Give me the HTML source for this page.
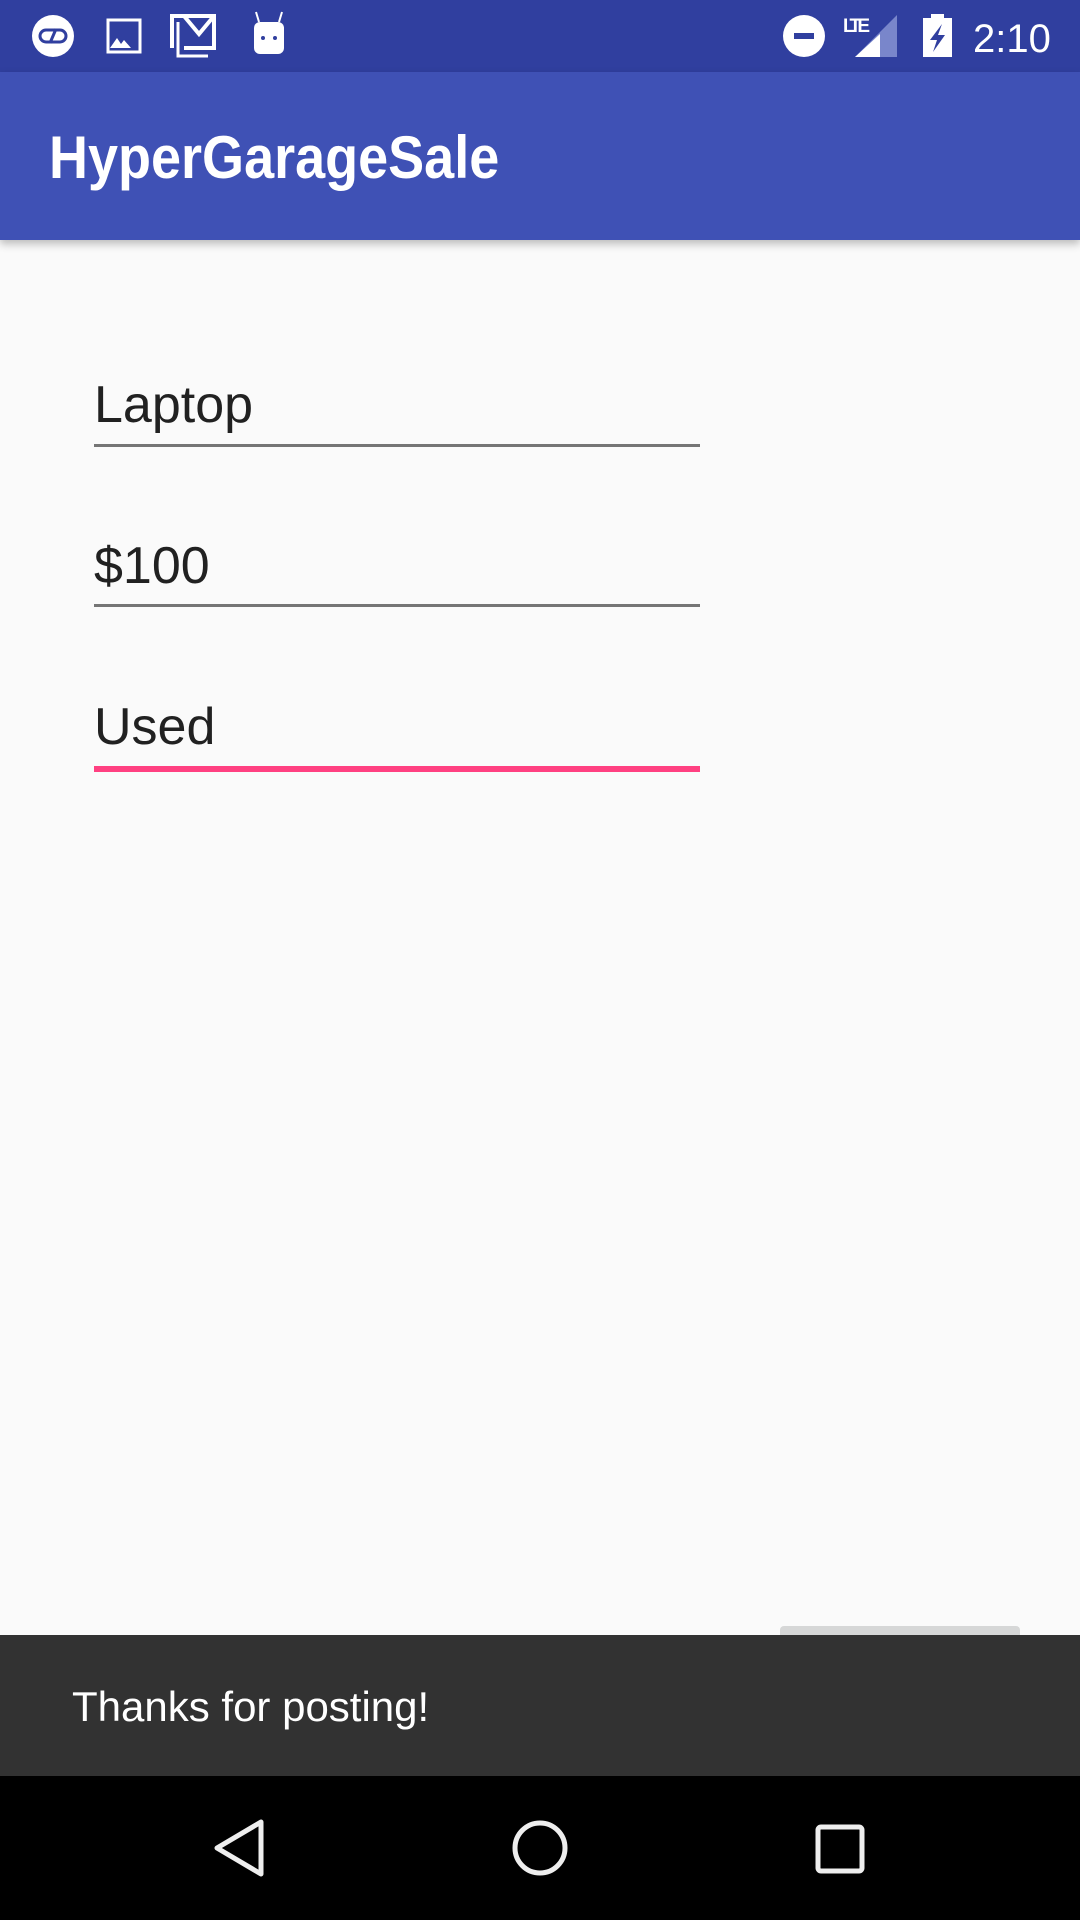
<!DOCTYPE html>
<html><head><style>
html,body{margin:0;padding:0;width:1080px;height:1920px;overflow:hidden;background:#fafafa;font-family:"Liberation Sans",sans-serif;position:relative}
.abs{position:absolute}
.txt{color:#212121;font-size:52px;line-height:1;left:94px}
.line{left:94px;width:606px;height:3px;background:#757575}
</style></head><body>
<div class="abs" style="left:0;top:0;width:1080px;height:72px;background:#303f9f"></div>
<div class="abs" style="left:0;top:72px;width:1080px;height:168px;background:#3f51b5;box-shadow:0 4px 8px rgba(0,0,0,0.25)"></div>
<svg class="abs" style="left:0;top:0" width="1080" height="72">
 <circle cx="53" cy="36" r="21" fill="#fff"/>
 <rect x="40" y="30" width="26" height="12" rx="6" fill="none" stroke="#303f9f" stroke-width="3"/>
 <line x1="50" y1="43" x2="56" y2="29" stroke="#303f9f" stroke-width="3"/>
 <path d="M110 48 L117 38 L121 44 L124 40 L131 48Z" fill="#fff"/>
 <rect x="108" y="20" width="32" height="32" fill="none" stroke="#fff" stroke-width="3"/>
 <path d="M170 16 H214 V48 H184" fill="none" stroke="#fff" stroke-width="4"/>
 <path d="M178 22 V56 H208" fill="none" stroke="#fff" stroke-width="3"/>
 <path d="M184 16 L199 34 L214 16" fill="none" stroke="#fff" stroke-width="4"/>
 <path d="M172 16 V48" stroke="#fff" stroke-width="4"/>
 <rect x="254" y="22" width="30" height="32" rx="6" fill="#fff"/>
 <line x1="259" y1="22" x2="256" y2="12" stroke="#fff" stroke-width="2"/>
 <line x1="279" y1="22" x2="282" y2="12" stroke="#fff" stroke-width="2"/>
 <circle cx="263" cy="38" r="2" fill="#303f9f"/><circle cx="275" cy="38" r="2" fill="#303f9f"/>
 <circle cx="804" cy="36" r="21" fill="#fff"/>
 <rect x="794" y="33" width="20" height="6" fill="#303f9f"/>
 <text x="843" y="32" fill="#fff" font-size="19" font-weight="bold" font-family="Liberation Sans Narrow,Liberation Sans,sans-serif" textLength="27">LTE</text>
 <path d="M897 15 V57 H855Z" fill="#7986cb"/>
 <path d="M880 34 V57 H855Z" fill="#fff"/>
 <rect x="923" y="18" width="29" height="39" fill="#fff"/><rect x="931" y="14" width="13" height="5" fill="#fff"/>
 <path d="M942 24 L930 40 H937 L933 52 L945 35 H938Z" fill="#303f9f"/>
 <text x="973" y="52" fill="#fff" font-size="40">2:10</text>
</svg>
<div class="abs" style="left:49px;top:128px;color:#fff;font-size:60px;font-weight:bold;line-height:1;transform:scaleX(0.9);transform-origin:left">HyperGarageSale</div>
<div class="abs txt" style="top:379px">Laptop</div>
<div class="abs line" style="top:444px"></div>
<div class="abs txt" style="top:540px">$100</div>
<div class="abs line" style="top:604px"></div>
<div class="abs txt" style="top:701px">Used</div>
<div class="abs line" style="top:766px;height:6px;background:#ff4081"></div>
<div class="abs" style="left:780px;top:1626px;width:240px;height:30px;background:#d6d7d7;border-radius:4px"></div>
<div class="abs" style="left:0;top:1635px;width:1080px;height:141px;background:#323232"></div>
<div class="abs" style="left:72px;top:1686px;color:#fff;font-size:42px;line-height:1">Thanks for posting!</div>
<div class="abs" style="left:0;top:1776px;width:1080px;height:144px;background:#000"></div>
<svg class="abs" style="left:0;top:1776px" width="1080" height="144">
 <path d="M261 46 L217 72 L261 98Z" fill="none" stroke="#eee" stroke-width="5" stroke-linejoin="round"/>
 <circle cx="540" cy="72" r="25" fill="none" stroke="#eee" stroke-width="5"/>
 <rect x="818" y="51" width="44" height="44" rx="3" fill="none" stroke="#eee" stroke-width="5"/>
</svg>
</body></html>
